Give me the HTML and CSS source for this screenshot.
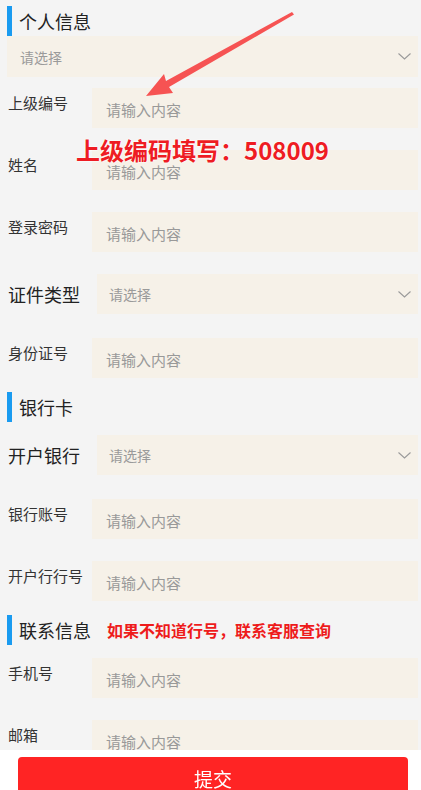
FILE: index.html
```html
<!DOCTYPE html>
<html lang="zh-CN">
<head>
  <meta charset="UTF-8" />
  <meta name="viewport" content="width=device-width, initial-scale=1.0"/>
  <title>注册</title>
  <link rel="stylesheet" href="styles.css">
</head>
<body>
  <div class="page">
    <section class="group">
      <h2 class="group-title group-title-flush">个人信息</h2>
      <div class="picker picker-wide">
        <span>请选择</span>
        <svg class="chevron" width="13" height="7" viewBox="0 0 13 7"><path d="M0.5 0.5 L6.5 6 L12.5 0.5" fill="none" stroke="#9a9a9a" stroke-width="1.1"/></svg>
      </div>
      <div class="field">
        <label class="field-label">上级编号</label>
        <input class="field-input" type="text" placeholder="请输入内容">
      </div>
      <div class="field">
        <label class="field-label">姓名</label>
        <input class="field-input" type="text" placeholder="请输入内容">
      </div>
      <div class="field">
        <label class="field-label">登录密码</label>
        <input class="field-input" type="password" placeholder="请输入内容">
      </div>
      <div class="field field-pick">
        <label class="field-label">证件类型</label>
        <div class="picker">
          <span>请选择</span>
          <svg class="chevron" width="13" height="7" viewBox="0 0 13 7"><path d="M0.5 0.5 L6.5 6 L12.5 0.5" fill="none" stroke="#9a9a9a" stroke-width="1.1"/></svg>
        </div>
      </div>
      <div class="field">
        <label class="field-label">身份证号</label>
        <input class="field-input" type="text" placeholder="请输入内容">
      </div>
    </section>

    <section class="group">
      <h2 class="group-title">银行卡</h2>
      <div class="field field-pick">
        <label class="field-label">开户银行</label>
        <div class="picker">
          <span>请选择</span>
          <svg class="chevron" width="13" height="7" viewBox="0 0 13 7"><path d="M0.5 0.5 L6.5 6 L12.5 0.5" fill="none" stroke="#9a9a9a" stroke-width="1.1"/></svg>
        </div>
      </div>
      <div class="field">
        <label class="field-label">银行账号</label>
        <input class="field-input" type="text" placeholder="请输入内容">
      </div>
      <div class="field">
        <label class="field-label">开户行行号</label>
        <input class="field-input" type="text" placeholder="请输入内容">
      </div>
    </section>

    <section class="group">
      <h2 class="group-title">联系信息<span class="hint">如果不知道行号，联系客服查询</span></h2>
      <div class="field">
        <label class="field-label">手机号</label>
        <input class="field-input" type="text" placeholder="请输入内容">
      </div>
      <div class="field">
        <label class="field-label">邮箱</label>
        <input class="field-input" type="text" placeholder="请输入内容">
      </div>
    </section>
  </div>

  <!-- annotation drawn over the form -->
  <svg class="arrow" width="421" height="110" viewBox="0 0 421 110">
    <polygon points="146,96 164,74 166,81 292,12 294,14.5 169,87 173,93" fill="#f65353"/>
  </svg>
  <div class="notice">上级编码填写：508009</div>

  <div class="footer">
    <button class="submit" type="button">提交</button>
  </div>
</body>
</html>
```

FILE: styles.css
```css
body {
  margin: 0;
  background: #f4f4f4;
  color: #333;
  font-family: "Noto Sans CJK SC", "Noto Sans", sans-serif;
}
.page {
  padding: 6px 3px 0 0;
}
.group-title {
  display: flex;
  align-items: center;
  height: 30px;
  margin: 0 0 13px 7px;
  padding-left: 7px;
  border-left: 5px solid #1a9bf0;
  font-size: 18px;
  font-weight: normal;
  color: #222;
}
.group-title-flush {
  margin-bottom: 0;
}
.hint {
  margin-left: 16px;
  font-size: 16px;
  font-weight: bold;
  color: #ee1b1b;
}
.picker {
  flex: 1;
  display: flex;
  align-items: center;
  justify-content: space-between;
  height: 40px;
  padding: 0 7px 0 12px;
  background: #f6f1e8;
  font-size: 14px;
  color: #9a9a9a;
}
.picker-wide {
  height: 41px;
  margin: 0 0 11px 7px;
  padding-left: 13px;
}
.chevron {
  display: block;
}
.field {
  display: flex;
  margin: 0 0 22px 8px;
}
.group .field:last-child {
  margin-bottom: 14px;
}
.group:last-child .field:last-child {
  margin-bottom: 0;
}
.field-label {
  width: 84px;
  flex-shrink: 0;
  padding-top: 5px;
  font-size: 15px;
  line-height: 20px;
  color: #333;
}
.field-input {
  flex: 1;
  min-width: 0;
  height: 40px;
  box-sizing: border-box;
  padding: 2px 14px 0;
  border: none;
  outline: none;
  background: #f6f1e8;
  font-family: inherit;
  font-size: 15px;
  color: #333;
}
.field-input::placeholder {
  color: #999;
}
.field-pick {
  align-items: center;
  margin-bottom: 24px;
}
.field + .field-pick {
  margin-top: 3px;
}
.field-pick .field-label {
  width: 89px;
  padding-top: 0;
  font-size: 18px;
  line-height: 24px;
  color: #222;
}
.arrow {
  position: absolute;
  left: 0;
  top: 0;
  pointer-events: none;
}
.notice {
  position: absolute;
  left: 76px;
  top: 135px;
  font-size: 24px;
  line-height: 30px;
  font-weight: bold;
  color: #ee1c23;
  text-shadow: 0 0 2px #fff, 0 0 2px #fff;
}
.footer {
  position: fixed;
  left: 0;
  right: 0;
  bottom: 0;
  height: 40px;
  background: #fff;
}
.submit {
  display: block;
  width: 390px;
  height: 33px;
  box-sizing: border-box;
  margin: 7px 0 0 18px;
  padding: 11px 0 0;
  border: none;
  border-radius: 4px 4px 0 0;
  background: #ff2424;
  color: #fff;
  font-family: inherit;
  font-size: 19px;
  line-height: 20px;
}
```
